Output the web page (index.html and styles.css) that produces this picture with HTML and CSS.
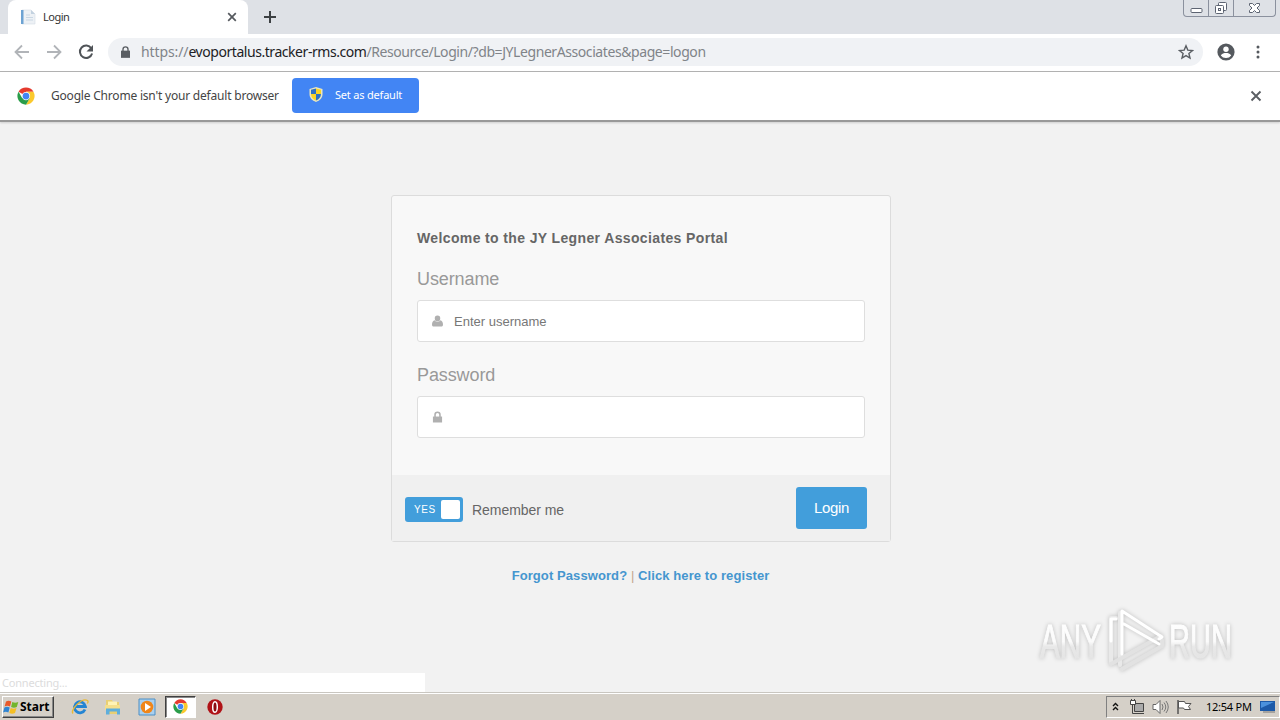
FILE: index.html
```html
<!DOCTYPE html>
<html lang="en">
<head>
    <meta charset="UTF-8">
    <meta name="viewport" content="width=device-width, initial-scale=1.0">
    <title>Login</title>
    <link rel="stylesheet" href="styles.css">
</head>
<body>
    <svg width="0" height="0" class="defs">
        <symbol id="chrome" viewBox="0 0 48 48">
            <circle cx="24" cy="24" r="23" fill="#fff"/>
            <path d="M24 24 4.100 12.500A23 23 0 0 1 43.900 12.500H24z" fill="#e53a2e"/>
            <path d="M24 24V12.500H43.900A23 23 0 0 1 24 47L34 30z" fill="#fbc92d"/>
            <path d="M24 24 34 30 24 47A23 23 0 0 1 4.100 12.500L14 30z" fill="#2a9d4a"/>
            <circle cx="24" cy="24" r="11" fill="#fff"/>
            <circle cx="24" cy="24" r="9" fill="#4285f4"/>
        </symbol>
    </svg>

    <div class="tab-strip">
        <div class="tab">
            <svg class="favicon" width="16" height="16" viewBox="0 0 16 16">
                <path d="M2 1h9l4 4v10H2z" fill="#edf1f5" stroke="#d5dce4" stroke-width=".6"/>
                <path d="M1 1h2.500v14H1z" fill="#6da3d3"/>
                <path d="M11 1v4h4z" fill="#c3d2e0"/>
                <path d="M6 6h4M6 8.500h7M6 11h7" stroke="#c9d7e4"/>
            </svg>
            <span class="tab-title">Login</span>
            <svg width="10" height="10" viewBox="0 0 10 10"><path d="M1.200 1.200l7.600 7.600M8.800 1.200L1.200 8.800" stroke="#55595e" stroke-width="1.700"/></svg>
        </div>
        <svg class="new-tab" width="12" height="12" viewBox="0 0 12 12"><path d="M6 0v12M0 6h12" stroke="#3c4043" stroke-width="2"/></svg>
        <div class="window-buttons">
            <span class="win-btn"><svg width="13" height="16" viewBox="0 0 13 16"><rect x="1" y="8.500" width="11" height="4" rx="1" fill="#fff" stroke="#5d6472"/></svg></span>
            <span class="win-btn"><svg width="14" height="16" viewBox="0 0 14 16"><g fill="#fff" stroke="#5d6472"><rect x="4.500" y="2.500" width="8" height="8" rx="1"/><rect x="1.500" y="5.500" width="8" height="8" rx="1"/><rect x="4.500" y="8.500" width="2" height="2"/></g></svg></span>
            <span class="win-btn wide"><svg width="13" height="16" viewBox="0 0 13 16"><path d="M1.500 3.500h3l2 2 2-2h3v2l-2.500 2.500 2.500 2.500v2h-3l-2-2-2 2h-3v-2L4 8 1.500 5.500z" fill="#fff" stroke="#5d6472"/></svg></span>
        </div>
    </div>

    <div class="toolbar">
        <svg width="16" height="16" viewBox="0 0 16 16"><path d="M15 8H2M8 1.500L1.500 8 8 14.500" fill="none" stroke="#b1b4b8" stroke-width="1.800"/></svg>
        <svg width="16" height="16" viewBox="0 0 16 16"><path d="M1 8h13M8 1.500L14.500 8 8 14.500" fill="none" stroke="#b1b4b8" stroke-width="1.800"/></svg>
        <svg width="16" height="16" viewBox="0 0 16 16"><path d="M13.300 4.300A6.200 6.200 0 1 0 14.100 9.500" fill="none" stroke="#505458" stroke-width="2"/><path d="M15 1v6.500H8.500z" fill="#505458"/></svg>
        <div class="address-bar">
            <svg width="9" height="12" viewBox="0 0 10 13"><path d="M0 5h10v8H0z" fill="#5a5e63"/><path d="M2.200 6V3.600a2.800 2.800 0 0 1 5.600 0V6" fill="none" stroke="#5a5e63" stroke-width="1.500"/></svg>
            <div class="url"><span class="scheme">https://</span><span class="host">evoportalus.tracker-rms.com</span><span class="path">/Resource/Login/?db=JYLegnerAssociates&amp;page=logon</span></div>
            <svg class="star" width="16" height="16" viewBox="0 0 16 16"><path d="M8 1.800l1.800 4.300 4.700.4-3.600 3 1.100 4.600L8 11.600 4 14.100l1.100-4.600-3.600-3 4.700-.4z" fill="none" stroke="#5a5e63" stroke-width="1.400"/></svg>
        </div>
        <svg class="avatar" width="18" height="18" viewBox="0 0 18 18"><circle cx="9" cy="9" r="8.600" fill="#55595e"/><circle cx="9" cy="6.200" r="2.700" fill="#fff"/><path d="M3.800 12.400c1-1.900 3.300-2.400 5.200-2.400s4.200.5 5.200 2.400A6.300 6.300 0 0 1 9 15a6.300 6.300 0 0 1-5.200-2.600z" fill="#fff"/></svg>
        <svg width="4" height="14" viewBox="0 0 4 14"><g fill="#55595e"><circle cx="2" cy="2" r="1.500"/><circle cx="2" cy="7" r="1.500"/><circle cx="2" cy="12" r="1.500"/></g></svg>
    </div>

    <div class="infobar">
        <svg width="18" height="18"><use href="#chrome"/></svg>
        <span class="info-text">Google Chrome isn't your default browser</span>
        <button class="default-btn">
            <svg width="14" height="15" viewBox="0 0 14 15">
                <path d="M7 0L13.500 2v5c0 4-2.500 6.400-6.500 8C3 13.400.5 11 .5 7V2z" fill="#e9e6c0"/>
                <path d="M7 1.500V7H2V2.800z" fill="#2f71c4"/><path d="M7 1.500V7h5V2.800z" fill="#fbd423"/>
                <path d="M7 7H2c.1 3.500 2 5.300 5 6.500z" fill="#fbd423"/><path d="M7 7h5c-.1 3.500-2 5.300-5 6.500z" fill="#2f71c4"/>
            </svg>
            <span>Set as default</span>
        </button>
        <svg class="info-close" width="12" height="12" viewBox="0 0 12 12"><path d="M1.500 1.500l9 9M10.500 1.500l-9 9" stroke="#5a5e63" stroke-width="1.900"/></svg>
    </div>

    <main class="page">
        <form class="login-box">
            <div class="login-body">
                <h1>Welcome to the JY Legner Associates Portal</h1>
                <label>Username</label>
                <div class="field">
                    <svg width="11" height="12" viewBox="0 0 12 12"><path d="M6 0a3 3 0 0 1 3 3.200C9 5 7.800 6.600 6 6.600S3 5 3 3.200A3 3 0 0 1 6 0zM3 5.300c.8 1 1.800 1.800 3 1.800s2.200-.8 3-1.800c2 .3 3 2.500 3 4.700 0 1.200-.7 2-1.800 2H1.800C.7 12 0 11.200 0 10c0-2.200 1-4.400 3-4.700z" fill="#b0b0b0"/></svg>
                    <span>Enter username</span>
                </div>
                <label>Password</label>
                <div class="field">
                    <svg width="11" height="12" viewBox="0 0 12 12"><path d="M1 5.500h10V12H1z" fill="#b0b0b0"/><path d="M3.300 6V3.500a2.700 2.700 0 0 1 5.400 0V6" fill="none" stroke="#b0b0b0" stroke-width="1.700"/></svg>
                </div>
            </div>
            <div class="login-footer">
                <span class="toggle">YES<i></i></span>
                <span class="remember">Remember me</span>
                <button class="login-btn">Login</button>
            </div>
        </form>
        <p class="links"><a>Forgot Password?</a> <span>|</span> <a>Click here to register</a></p>

        <svg class="watermark" width="240" height="72" viewBox="0 0 240 72">
            <defs>
                <linearGradient id="fade" x1="0" y1="0" x2="0" y2="1">
                    <stop offset="0" stop-color="#fff"/><stop offset=".5" stop-color="#fbfbfb"/>
                    <stop offset=".6" stop-color="#e8e8e8"/><stop offset="1" stop-color="#e2e2e2"/>
                </linearGradient>
            </defs>
            <g class="mark-text" fill="url(#fade)" stroke="url(#fade)">
                <text x="4" y="53" textLength="61" lengthAdjust="spacingAndGlyphs">ANY</text>
                <text x="133" y="53" textLength="63" lengthAdjust="spacingAndGlyphs">RUN</text>
            </g>
            <g fill="none" stroke-linejoin="round" stroke-linecap="round">
                <path d="M84 60V8M75 57V13h5" stroke="#e9e9e9" stroke-width="4"/>
                <path d="M75 59l50-28M86 64l40-23v-6" stroke="#e2e2e2" stroke-width="4"/>
                <path d="M86 49V6l40 26-3 2M88 19l35 20M75 36V14h5" stroke="#fff" stroke-width="3"/>
            </g>
        </svg>
        <div class="status">Connecting...</div>
    </main>

    <div class="taskbar">
        <div class="start-btn">
            <svg width="17" height="16" viewBox="0 0 17 16">
                <path d="M3 2.500c2-1.200 3.500-1 5.300 0L7 7.500c-1.900-1-3.500-1.100-5.400 0z" fill="#e8592b"/>
                <path d="M9.300 3c2 1 3.700 1 6 0l-1.500 5c-2 1-3.700 1-5.700 0z" fill="#73b52d"/>
                <path d="M1.400 8.600c1.800-1.100 3.500-1 5.300 0l-1.300 5c-1.900-1-3.500-1-5.300 0z" fill="#2f84d2"/>
                <path d="M7.700 9c2 1 3.700 1 5.800 0L12 14c-2 1-3.800 1-5.700 0z" fill="#f5bf24"/>
            </svg>
            <b>Start</b>
        </div>
        <div class="quick-launch">
            <svg width="18" height="18" viewBox="0 0 18 18"><path d="M14 11.500a5.500 5.500 0 1 1 .4-3H5" fill="none" stroke="#2485d3" stroke-width="2.800"/><path d="M2 15.500C-1 12 11-1 16.500 2.500c.8.700.5 2-.2 3" fill="none" stroke="#e9b936" stroke-width="1.300"/></svg>
            <svg width="18" height="18" viewBox="0 0 18 18"><path d="M2 2h6l1 2h6v12H2z" fill="#e9cf73"/><path d="M4 3.500h9v8H4z" fill="#fff3b5"/><path d="M1 7h15v5H1z" fill="#f5df8c"/><path d="M2 16.500v-6h14v6h-3v-3H5.500v3z" fill="#5eaedc"/></svg>
            <svg width="18" height="18" viewBox="0 0 18 18"><path d="M1 1h16v16H1z" fill="#a9d0ef" stroke="#4d8fc5"/><circle cx="9" cy="9" r="6.300" fill="#f08619"/><path d="M7 5l6 4-6 4z" fill="#fff"/></svg>
        </div>
        <div class="active-task"><svg width="15" height="15"><use href="#chrome"/></svg></div>
        <svg class="opera" width="16" height="16" viewBox="0 0 16 16"><circle cx="8" cy="8" r="7.700" fill="#b01217"/><ellipse cx="8" cy="8" rx="2.300" ry="5.300" fill="#8c0b10" stroke="#fff" stroke-width="1.500"/></svg>
        <div class="tray">
            <svg width="7" height="9" viewBox="0 0 7 9"><path d="M1 4l2.500-2.500L6 4M1 8l2.500-2.500L6 8" fill="none" stroke="#111" stroke-width="1.400"/></svg>
            <svg class="net" width="16" height="16" viewBox="0 0 16 16"><path d="M5.500 4.500h9v8h-9z" fill="#aaa" stroke="#444"/><path d="M5 14.500h10M3.500 6v8.500H5M2.500 0v2M5.500 0v2" fill="none" stroke="#444"/><path d="M1.500 1.500h5v4h-5z" fill="#fff" stroke="#444"/></svg>
            <svg class="sound" width="17" height="16" viewBox="0 0 17 16"><path d="M1 5.500h3L8 1.500v13l-4-4H1z" fill="#fff" stroke="#666"/><path d="M10 5q2 3 0 6M12 3.500q3.500 4.500 0 9M14 2q4.500 6 0 12" fill="none" stroke="#777"/></svg>
            <svg class="flag" width="17" height="16" viewBox="0 0 17 16"><path d="M2.500 2.500h6l1 2h5.500l-2.500 3 2 3h-6l-1-1.500h-5z" fill="#fff" stroke="#555"/><path d="M2 1v14" stroke="#555" stroke-width="1.500"/></svg>
            <span class="clock">12:54 PM</span>
            <svg width="16" height="13" viewBox="0 0 16 13"><path d="M0 1h15v10H0z" fill="#1d5aa8"/><path d="M1 2h13L1 8z" fill="#4b91dc"/><path d="M3 12h12" stroke="#777"/></svg>
        </div>
    </div>
</body>
</html>
```

FILE: styles.css
```css
* {
    margin: 0;
    padding: 0;
    box-sizing: border-box;
}

body {
    width: 1280px;
    height: 720px;
    overflow: hidden;
    display: flex;
    flex-direction: column;
    font-family: "Noto Sans", sans-serif;
    background-color: #f2f2f2;
}

svg {
    display: block;
    flex: none;
}

.defs {
    position: absolute;
}

button {
    border: none;
    font-family: inherit;
}

/* tab strip */
.tab-strip {
    height: 34px;
    background-color: #dee1e6;
    display: flex;
    align-items: flex-start;
    padding-left: 8px;
}

.tab {
    width: 240px;
    height: 34px;
    background-color: #fff;
    border-radius: 8px 8px 0 0;
    display: flex;
    align-items: center;
    padding: 0 11px 0 12px;
}

.tab-title {
    flex: 1;
    margin: 0 0 2px 7px;
    font-size: 11px;
    letter-spacing: -0.5px;
    color: #333;
}

.new-tab {
    margin: 11px 0 0 16px;
}

.window-buttons {
    margin-left: auto;
    margin-right: 4px;
    display: flex;
    height: 17px;
    border: 1px solid #8b919e;
    border-top: none;
    border-radius: 0 0 4px 4px;
}

.win-btn {
    width: 25px;
    display: flex;
    justify-content: center;
    border-right: 1px solid #8b919e;
}

.win-btn.wide {
    width: 41px;
    border-right: none;
}

/* toolbar */
.toolbar {
    height: 38px;
    background-color: #fff;
    border-bottom: 1px solid #b3b3b3;
    display: flex;
    align-items: center;
    padding: 0 20px 1px 14px;
}

.toolbar > svg + svg {
    margin-left: 16px;
}

.address-bar {
    width: 1095px;
    height: 28px;
    margin-left: 14px;
    border-radius: 14px;
    background-color: #f0f2f5;
    display: flex;
    align-items: center;
    padding: 0 9px 0 13px;
}

.url {
    flex: 1;
    margin: 0 0 2px 11px;
    font-size: 14px;
    white-space: nowrap;
    color: #808489;
}

.scheme {
    letter-spacing: -0.1px;
}

.host {
    letter-spacing: -0.45px;
    color: #202124;
}

.path {
    letter-spacing: -0.42px;
}

.avatar {
    margin-left: 14px;
}

.toolbar > .avatar + svg {
    margin-left: 21px;
}

/* default browser bar */
.infobar {
    height: 50px;
    background-color: #fff;
    border-bottom: 2px solid #999;
    display: flex;
    align-items: center;
    padding: 0 18px 0 17px;
    box-shadow: 0 1px 2px rgba(0, 0, 0, 0.15);
    z-index: 1;
}

.info-text {
    width: 228px;
    margin: 0 0 2px 16px;
    font-size: 12px;
    letter-spacing: -0.2px;
    white-space: nowrap;
    color: #444;
}

.default-btn {
    width: 127px;
    height: 35px;
    margin: 0 0 1px 13px;
    padding: 0 0 2px 17px;
    border-radius: 4px;
    background-color: #4285f4;
    color: #fff;
    font-size: 11px;
    letter-spacing: -0.2px;
    display: flex;
    align-items: center;
    gap: 12px;
    white-space: nowrap;
}

.info-close {
    margin-left: auto;
}

/* login page */
.page {
    position: relative;
    flex: 1;
    padding-top: 73px;
    display: flex;
    flex-direction: column;
    align-items: center;
    font-family: "Liberation Sans", Arial, sans-serif;
}

.login-box {
    width: 500px;
    height: 347px;
    margin-left: 2px;
    border: 1px solid #dcdcdc;
    border-radius: 3px;
    background-color: #f8f8f8;
    display: flex;
    flex-direction: column;
}

.login-body {
    flex: 1;
    padding: 33px 25px 0;
}

.login-body h1 {
    font-size: 14px;
    line-height: 18px;
    letter-spacing: 0.37px;
    margin-bottom: 21px;
    color: #666;
}

.login-body label {
    display: block;
    height: 22px;
    line-height: 22px;
    font-size: 18px;
    letter-spacing: -0.1px;
    color: #999;
    margin-bottom: 10px;
}

.field {
    height: 42px;
    border: 1px solid #dedede;
    border-radius: 3px;
    background-color: #fff;
    display: flex;
    align-items: center;
    padding-left: 14px;
    gap: 11px;
    margin-bottom: 22px;
    font-size: 13px;
    color: #777;
}

.login-footer {
    height: 66px;
    background-color: #f0f0f0;
    display: flex;
    align-items: center;
    padding: 0 23px 0 13px;
}

.toggle {
    width: 58px;
    height: 25px;
    margin-top: 3px;
    padding: 0 3px 0 9px;
    border-radius: 3px;
    background-color: #429edb;
    color: #fff;
    font-size: 10px;
    letter-spacing: 0.6px;
    display: flex;
    align-items: center;
    justify-content: space-between;
}

.toggle i {
    width: 19px;
    height: 19px;
    border-radius: 2px;
    background-color: #fff;
}

.remember {
    margin: 4px 0 0 9px;
    font-size: 14px;
    letter-spacing: -0.05px;
    color: #666;
}

.login-btn {
    width: 71px;
    height: 42px;
    margin-left: auto;
    padding-bottom: 1px;
    border-radius: 3px;
    background-color: #429edb;
    color: #fff;
    font-size: 15px;
    letter-spacing: -0.3px;
}

.links {
    margin: 26px 0 0 1px;
    font-size: 13px;
    line-height: 16px;
    letter-spacing: 0.09px;
    font-weight: bold;
    color: #4596cf;
}

.links span {
    font-weight: normal;
    color: #c3a58f;
}

.watermark {
    position: absolute;
    right: 4px;
    bottom: 15px;
    filter: drop-shadow(0 0 2px rgba(0, 0, 0, 0.22));
}

.mark-text {
    font-family: "Liberation Sans", Arial, sans-serif;
    font-size: 48px;
}

.status {
    position: absolute;
    left: 0;
    bottom: 0;
    width: 425px;
    height: 19px;
    padding-left: 2px;
    background-color: #fff;
    font-family: "Noto Sans", sans-serif;
    font-size: 11px;
    line-height: 20px;
    letter-spacing: -0.2px;
    color: #dcdcdc;
}

/* taskbar */
.taskbar {
    height: 28px;
    background-color: #d5d0c8;
    border-top: 1px solid #c9c6c0;
    box-shadow: inset 0 1px 0 #fff;
    display: flex;
    align-items: center;
}

.start-btn {
    width: 52px;
    height: 22px;
    margin-left: 2px;
    border: 1px solid;
    border-color: #fff #404040 #404040 #fff;
    box-shadow: inset -1px -1px 0 #888;
    display: flex;
    align-items: center;
    font-size: 12px;
    color: #000;
}

.quick-launch {
    display: flex;
    gap: 15px;
    margin-left: 17px;
}

.quick-launch svg:last-child {
    margin-left: 1px;
}

.active-task {
    width: 31px;
    height: 22px;
    margin-left: 9px;
    border: 1px solid;
    border-color: #404040 #fff #fff #404040;
    box-shadow: inset 1px 1px 0 #888;
    background-color: #fff;
    display: flex;
    align-items: center;
    justify-content: center;
}

.opera {
    margin-left: 11px;
}

.tray {
    width: 174px;
    height: 22px;
    margin-left: auto;
    border: 1px solid;
    border-color: #808080 #fff #fff #808080;
    display: flex;
    align-items: center;
    padding-left: 5px;
}

.net {
    margin-left: 10px;
}

.sound {
    margin-left: 7px;
}

.flag {
    margin-left: 7px;
}

.clock {
    width: 46px;
    margin: 0 8px 0 13px;
    font-size: 11px;
    letter-spacing: -0.25px;
    white-space: nowrap;
    color: #000;
}
```
